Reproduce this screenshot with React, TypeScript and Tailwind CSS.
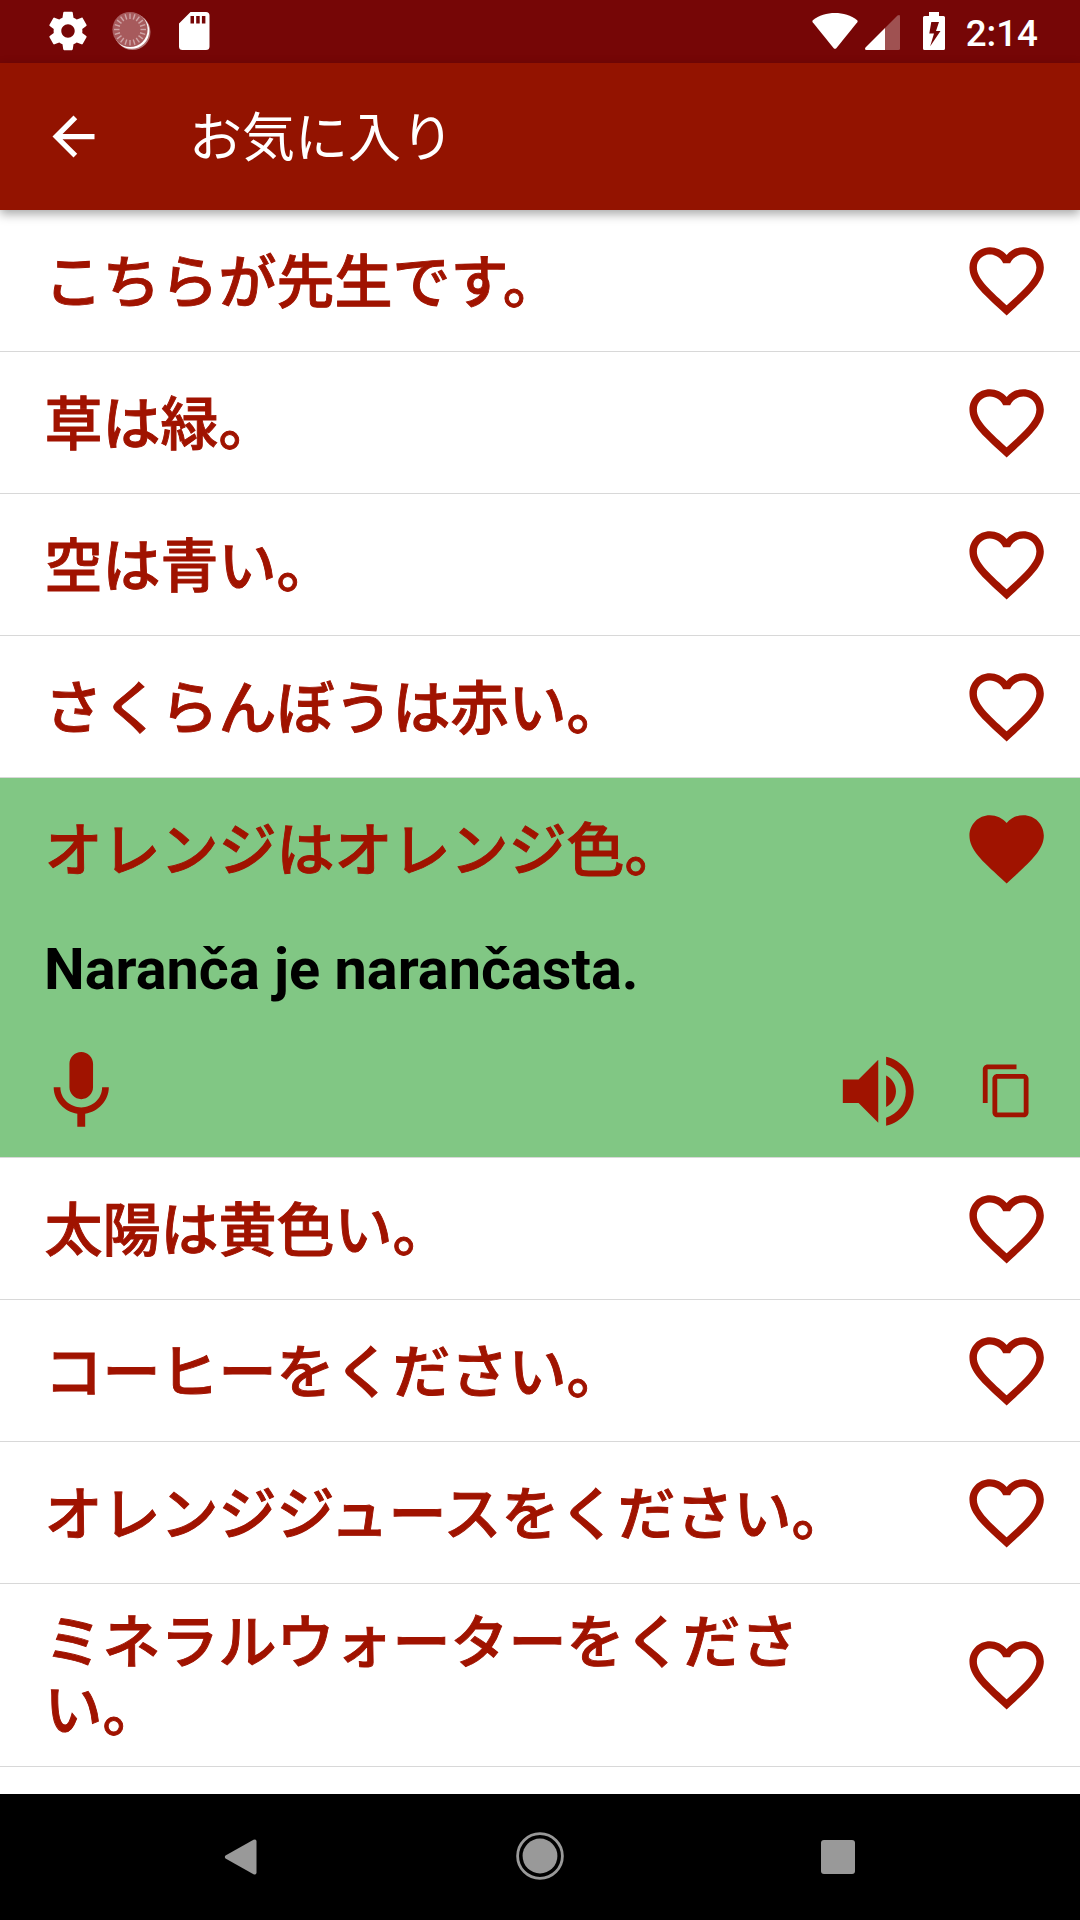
const phrases = [
    { id: 1, text: "こちらが先生です。" },
    { id: 2, text: "草は緑。" },
    { id: 3, text: "空は青い。" },
    { id: 4, text: "さくらんぼうは赤い。" },
    { id: 5, text: "オレンジはオレンジ色。", translation: "Naranča je narančasta." },
    { id: 6, text: "太陽は黄色い。" },
    { id: 7, text: "コーヒーをください。" },
    { id: 8, text: "オレンジジュースをください。" },
    { id: 9, text: "ミネラルウォーターをください。" },
];

const ticks = Array.from({ length: 20 }, (_, i) => i * 18);

function Icon({ d, className }: { d: string; className: string }) {
    return (
        <svg viewBox="0 0 24 24" fill="currentColor" className={`shrink-0 ${className}`}>
            <path d={d} />
        </svg>
    );
}

const icons = {
    settings: "M19.43 12.98c.04-.32.07-.64.07-.98s-.03-.66-.07-.98l2.11-1.65c.19-.15.24-.42.12-.64l-2-3.46c-.12-.22-.39-.3-.61-.22l-2.49 1c-.52-.4-1.08-.73-1.69-.98l-.38-2.65C14.46 2.18 14.25 2 14 2h-4c-.25 0-.46.18-.49.42l-.38 2.65c-.61.25-1.17.59-1.69.98l-2.49-1c-.23-.09-.49 0-.61.22l-2 3.46c-.13.22-.07.49.12.64l2.11 1.65c-.04.32-.07.65-.07.98s.03.66.07.98l-2.11 1.65c-.19.15-.24.42-.12.64l2 3.46c.12.22.39.3.61.22l2.49-1c.52.4 1.08.73 1.69.98l.38 2.65c.03.24.24.42.49.42h4c.25 0 .46-.18.49-.42l.38-2.65c.61-.25 1.17-.59 1.69-.98l2.49 1c.23.09.49 0 .61-.22l2-3.46c.12-.22.07-.49-.12-.64l-2.11-1.65zM12 15.5c-1.93 0-3.5-1.57-3.5-3.5s1.57-3.5 3.5-3.5 3.5 1.57 3.5 3.5-1.57 3.5-3.5 3.5z",
    back: "M20 11H7.83l5.59-5.59L12 4l-8 8 8 8 1.41-1.41L7.83 13H20v-2z",
    heart: "M12 21.35l-1.45-1.32C5.4 15.36 2 12.28 2 8.5 2 5.42 4.42 3 7.5 3c1.74 0 3.41.81 4.5 2.09C13.09 3.81 14.76 3 16.5 3 19.58 3 22 5.42 22 8.5c0 3.78-3.4 6.86-8.55 11.54L12 21.35z",
    heartOutline: "M16.5 3c-1.74 0-3.41.81-4.5 2.09C10.91 3.81 9.24 3 7.5 3 4.42 3 2 5.42 2 8.5c0 3.78 3.4 6.86 8.55 11.54L12 21.35l1.45-1.32C18.6 15.36 22 12.28 22 8.5 22 5.42 19.58 3 16.5 3zm-4.4 15.55l-.1.1-.1-.1C7.14 14.24 4 11.39 4 8.5 4 6.5 5.5 5 7.5 5c1.54 0 3.04.99 3.57 2.36h1.87C13.46 5.99 14.96 5 16.5 5c2 0 3.5 1.5 3.5 3.5 0 2.89-3.14 5.74-7.9 10.05z",
    mic: "M12 14c1.66 0 2.99-1.34 2.99-3L15 5c0-1.66-1.34-3-3-3S9 3.34 9 5v6c0 1.66 1.34 3 3 3zm5.3-3c0 3-2.54 5.1-5.3 5.1S6.7 14 6.7 11H5c0 3.41 2.72 6.23 6 6.72V21h2v-3.28c3.28-.48 6-3.3 6-6.72h-1.7z",
    volume: "M3 9v6h4l5 5V4L7 9H3zm13.5 3c0-1.77-1.02-3.29-2.5-4.03v8.05c1.48-.73 2.5-2.25 2.5-4.02zM14 3.23v2.06c2.89.86 5 3.54 5 6.71s-2.11 5.85-5 6.71v2.06c4.01-.91 7-4.49 7-8.77s-2.99-7.86-7-8.77z",
    copy: "M16 1H4c-1.1 0-2 .9-2 2v14h2V3h12V1zm3 4H8c-1.1 0-2 .9-2 2v14c0 1.1.9 2 2 2h11c1.1 0 2-.9 2-2V7c0-1.1-.9-2-2-2zm0 16H8V7h11v14z",
};

function StatusBar() {
    return (
        <div className="flex h-[63px] shrink-0 items-center justify-between bg-[#760606] pb-px pl-[45px] pr-[42px] text-white">
            <div className="flex items-center">
                <Icon d={icons.settings} className="size-[46px]" />
                {/* Sync spinner */}
                <svg viewBox="0 0 40 40" className="ml-[20.5px] size-[40px]">
                    <circle cx="20.5" cy="21" r="18" fill="#fff" fillOpacity="0.45" />
                    <circle cx="19.5" cy="20" r="17.8" fill="#fff" />
                    <circle cx="18" cy="18.5" r="17.6" fill="#a75a5c" />
                    {ticks.map((angle) => (
                        <path key={angle} d="M18 2.5v5.5" stroke="#fff" strokeOpacity="0.45" strokeWidth="1.4" transform={`rotate(${angle} 18 18.5)`} />
                    ))}
                </svg>
                {/* SD card */}
                <svg viewBox="0 0 31 38" fill="currentColor" className="ml-[27.5px] h-[38px] w-[31px]">
                    <path fillRule="evenodd" d="M11.5 0H27a3.5 3.5 0 0 1 3.5 3.5v31A3.5 3.5 0 0 1 27 38H3.5A3.5 3.5 0 0 1 0 34.5V11.5zM11.5 4v7.5h3.5V4zM17.2 4v7.5h3.5V4zM22.9 4v7.5h3.5V4z" />
                </svg>
            </div>
            <div className="flex items-center">
                <svg viewBox="0 0 46 36" fill="currentColor" className="h-[36px] w-[46px]">
                    <path d="M.8 7.3C13-2.4 33-2.4 45.2 7.3Q46 8.2 45.3 9.2L24.3 35.2Q23 36.5 21.7 35.2L.7 9.2Q0 8.2.8 7.3z" />
                </svg>
                <svg viewBox="0 0 35 35" fill="currentColor" className="ml-[7px] mt-[3px] size-[35px]">
                    <path fillOpacity="0.3" d="M20 13L32.5.6Q35-.8 35 1.5V33.5Q35 35 33.5 35H20z" />
                    <path d="M20 13V35H1.5Q-.8 35 .5 32.5z" />
                </svg>
                <svg viewBox="0 0 22 38" fill="currentColor" className="ml-[23px] h-[38px] w-[22px]">
                    <path fillRule="evenodd" d="M6 0h10v4h4.5Q22 4 22 5.5v31Q22 38 20.5 38h-19Q0 38 0 36.5v-31Q0 4 1.5 4H6zM8.3 10L6.3 21.5H11L7.2 34.3 17.5 19H13L16 10z" />
                </svg>
                <span className="ml-[21px] mt-[6px] font-[Roboto,sans-serif] text-[36.75px] font-medium leading-none">2:14</span>
            </div>
        </div>
    );
}

function NavBar() {
    return (
        <div className="z-10 flex h-[126px] shrink-0 items-center justify-between bg-black pb-px pl-[224px] pr-[225px] text-[#999]">
            <svg viewBox="0 0 34 36" fill="currentColor" className="h-[36px] w-[34px]">
                <path d="M1.5 16.6L29.5.7Q32.5-.4 32.5 2.5V33.5Q32.5 36.4 29.5 35.3L1.5 19.4Q.2 18 1.5 16.6z" />
            </svg>
            <svg viewBox="0 0 48 48" fill="currentColor" className="mb-px size-[48px]">
                <circle cx="24" cy="24" r="22.4" fill="none" stroke="currentColor" strokeWidth="2.8" />
                <circle cx="24" cy="24" r="17.4" />
            </svg>
            <div className="size-[34px] rounded-[3px] bg-current" />
        </div>
    );
}

export default function App() {
    return (
        <div className="flex h-[1920px] w-[1080px] flex-col overflow-hidden bg-white font-[Roboto,'Noto_Sans_CJK_JP',sans-serif]">
            <StatusBar />

            {/* App bar */}
            <header className="z-10 flex h-[147px] shrink-0 items-center bg-[#931300] pl-[42px] text-white shadow-[0_4px_10px_rgba(0,0,0,0.35)]">
                <Icon d={icons.back} className="size-[63px]" />
                <h1 className="ml-[84px] pt-[5px] text-[53px] leading-none">お気に入り</h1>
            </header>

            {/* Favourites */}
            <ul className="flex-1 overflow-hidden text-[#a01300]">
                {phrases.map((phrase) => (
                    <li key={phrase.id} className={`border-b border-[#d8d8d8] ${phrase.translation ? "h-[380px] bg-[#81c784]" : ""}`}>
                        <div className="flex min-h-[141px] items-center justify-between py-[23px] pl-[44.5px] pr-[29px]">
                            <p className="mt-[2px] -mb-[2px] w-[825px] text-[58px] font-medium leading-[68px] [-webkit-text-stroke:0.9px_#a01300]">{phrase.text}</p>
                            <Icon d={phrase.translation ? icons.heart : icons.heartOutline} className="size-[89.25px]" />
                        </div>
                        {phrase.translation && (
                            <>
                                <p className="mt-[17px] pl-[44px] text-[57.65px] font-bold leading-[68px] text-black">{phrase.translation}</p>
                                <div className="mt-[40px] flex items-center pl-[33.5px]">
                                    <Icon d={icons.mic} className="size-[94.5px]" />
                                    <Icon d={icons.volume} className="ml-[703px] size-[94.5px]" />
                                    <Icon d={icons.copy} className="ml-[52.5px] size-[57.75px]" />
                                </div>
                            </>
                        )}
                    </li>
                ))}
            </ul>

            <NavBar />
        </div>
    );
}
